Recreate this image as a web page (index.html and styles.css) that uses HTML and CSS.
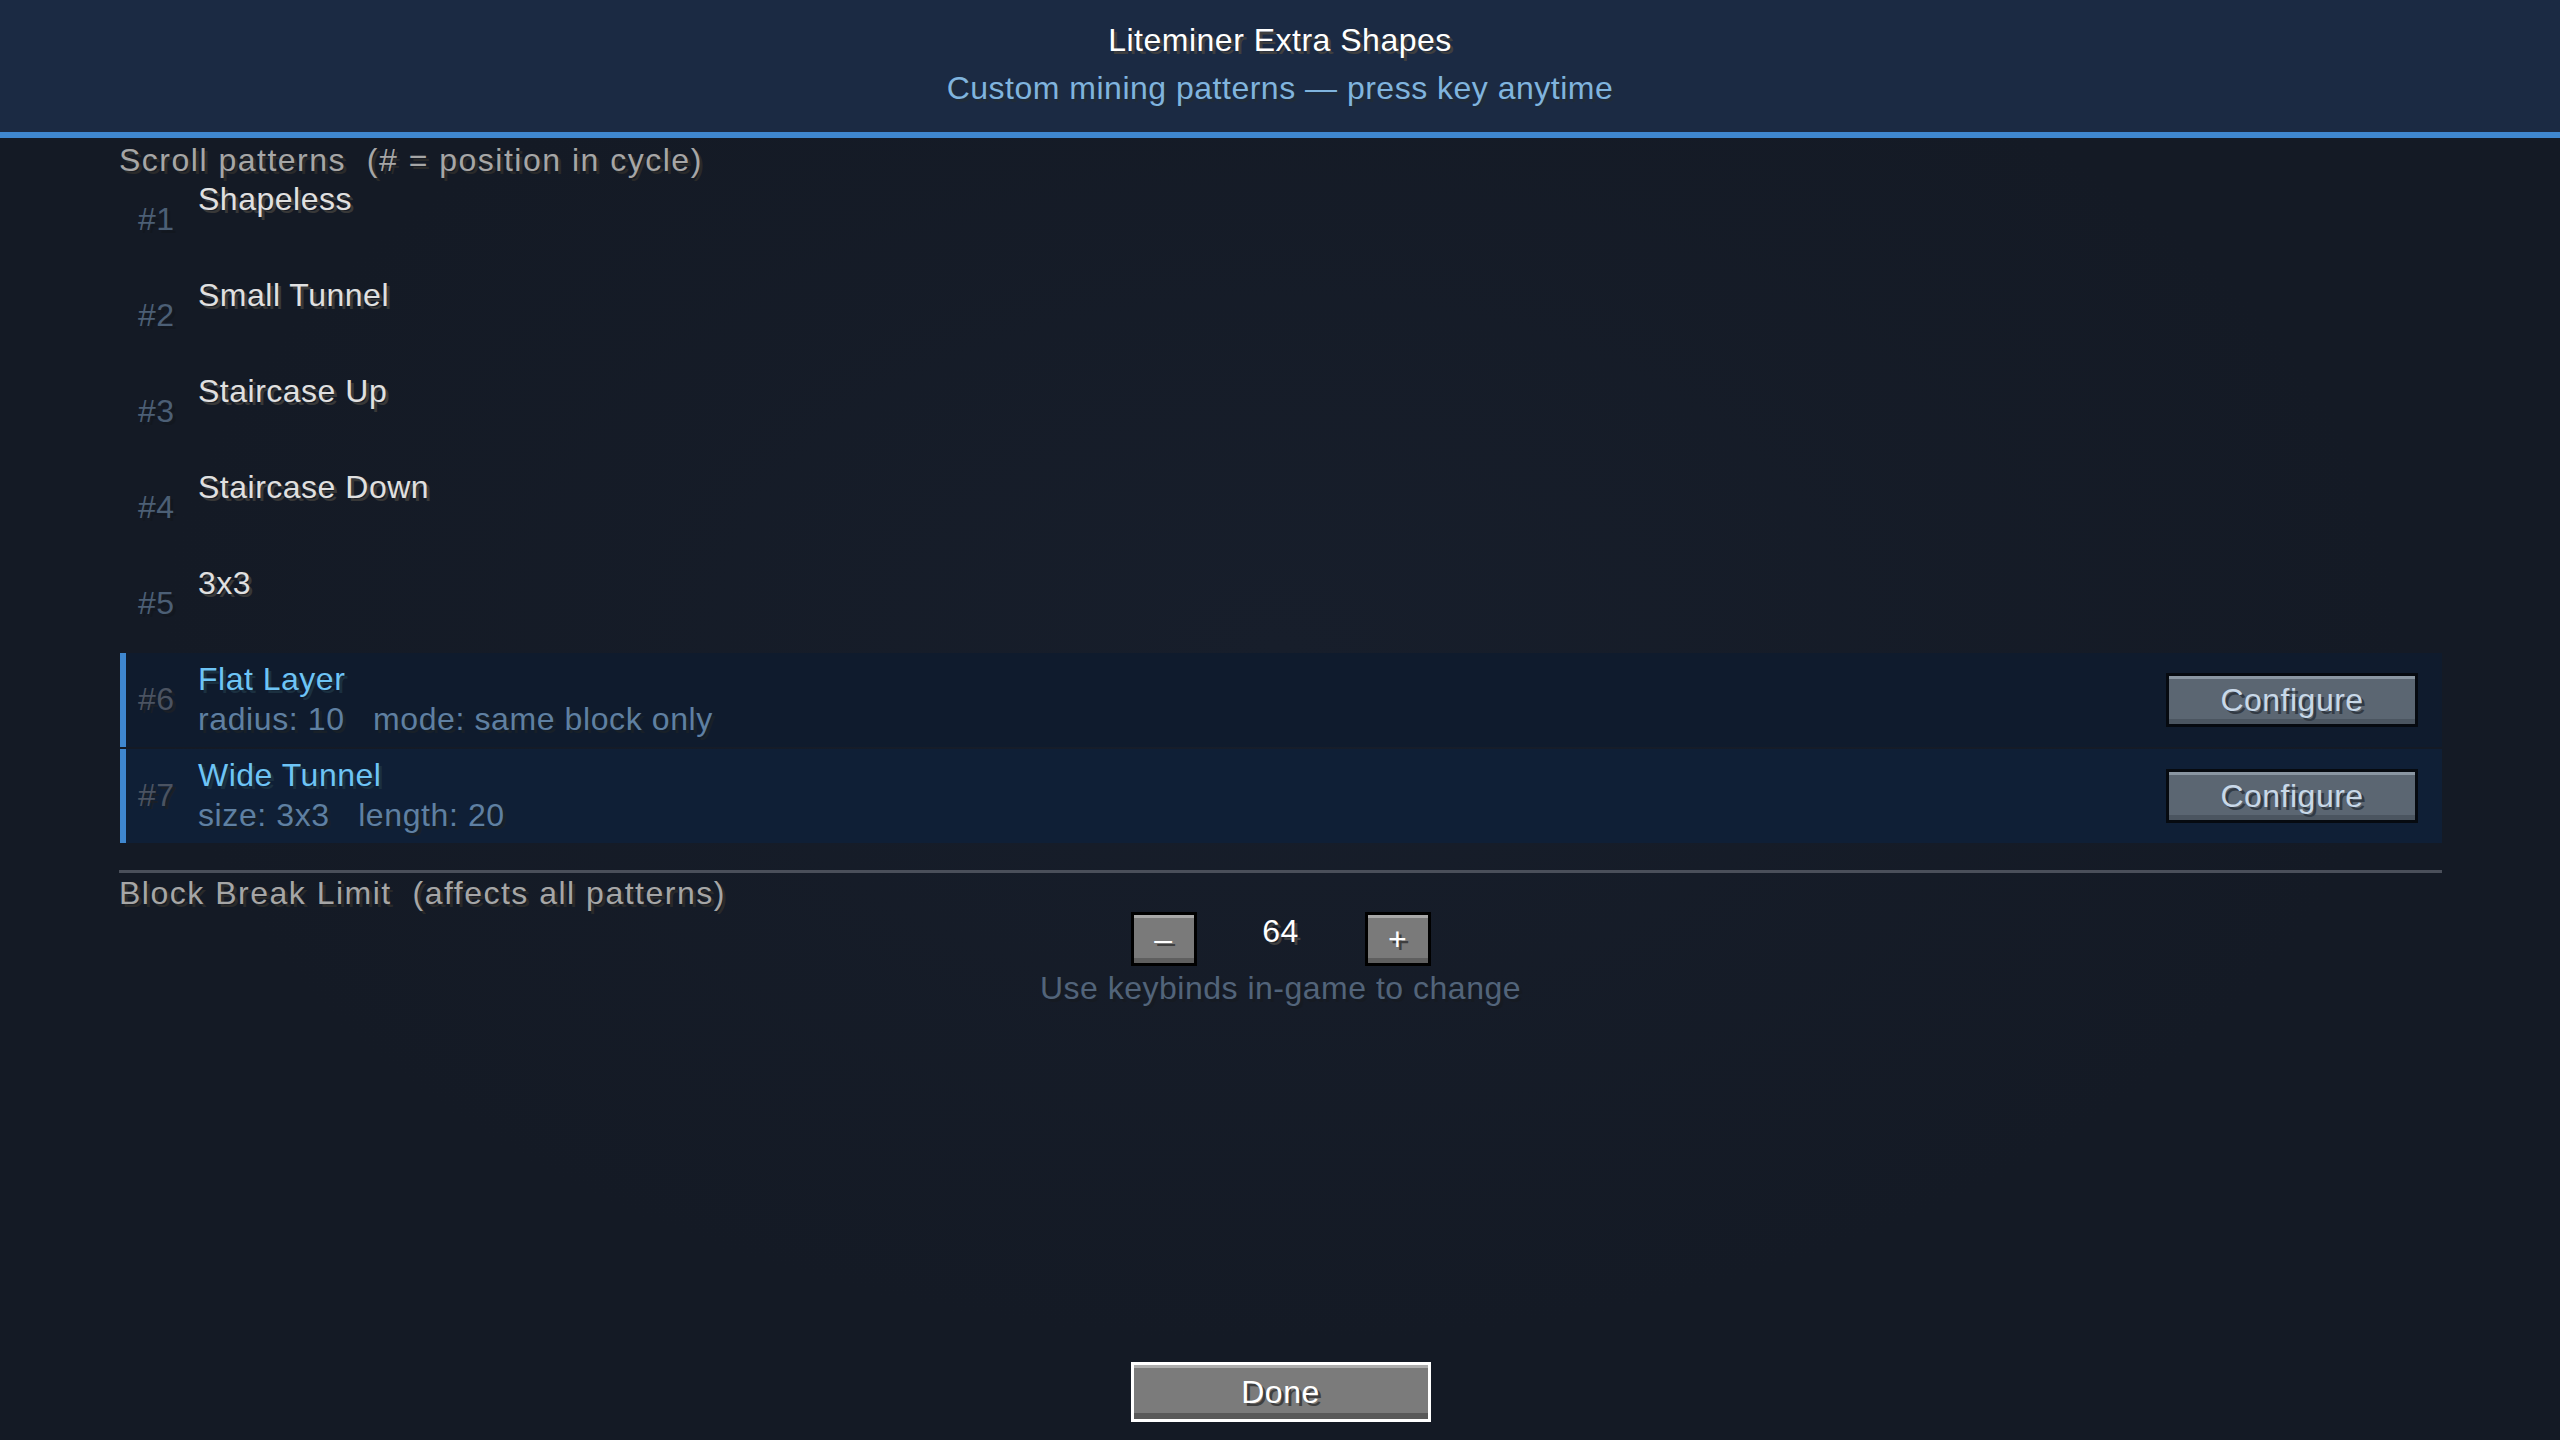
FILE: index.html
```html
<!DOCTYPE HTML>
<html lang="en">
<head>
    <meta charset="utf-8" />
    <meta name="viewport" content="width=device-width, initial-scale=1" />
    <title>Liteminer Extra Shapes</title>
    <link rel="stylesheet" href="styles.css">
</head>
<body>
    <div class="header">
        <div class="title">Liteminer Extra Shapes</div>
        <div class="subtitle">Custom mining patterns — press key anytime</div>
    </div>

    <div class="content">
        <div class="section-label scroll-label">Scroll patterns  (# = position in cycle)</div>

        <div class="pattern-list">
            <div class="pattern">
                <span class="hash">#1</span>
                <div class="info"><div class="name">Shapeless</div></div>
            </div>
            <div class="pattern">
                <span class="hash">#2</span>
                <div class="info"><div class="name">Small Tunnel</div></div>
            </div>
            <div class="pattern">
                <span class="hash">#3</span>
                <div class="info"><div class="name">Staircase Up</div></div>
            </div>
            <div class="pattern">
                <span class="hash">#4</span>
                <div class="info"><div class="name">Staircase Down</div></div>
            </div>
            <div class="pattern">
                <span class="hash">#5</span>
                <div class="info"><div class="name">3x3</div></div>
            </div>
            <div class="pattern custom">
                <span class="hash">#6</span>
                <div class="info">
                    <div class="name">Flat Layer</div>
                    <div class="meta">radius: 10   mode: same block only</div>
                </div>
                <button class="configure-btn">Configure</button>
            </div>
            <div class="pattern custom hovered">
                <span class="hash">#7</span>
                <div class="info">
                    <div class="name">Wide Tunnel</div>
                    <div class="meta">size: 3x3   length: 20</div>
                </div>
                <button class="configure-btn">Configure</button>
            </div>
        </div>

        <div class="divider"></div>
        <div class="section-label limit-label">Block Break Limit  (affects all patterns)</div>

        <div class="stepper">
            <button class="step-btn">–</button>
            <span class="step-value">64</span>
            <button class="step-btn">+</button>
        </div>
        <div class="hint">Use keybinds in-game to change</div>

        <div class="footer">
            <button class="done-btn">Done</button>
        </div>
    </div>
</body>
</html>
```

FILE: styles.css
```css
body {
    margin: 0;
    height: 100vh;
    display: flex;
    flex-direction: column;
    font-family: "Liberation Sans", Arial, sans-serif;
    font-size: 32px;
    line-height: 36px;
    letter-spacing: 0.5px;
    background-color: #141a25;
    background-image: radial-gradient(ellipse at 50% 45%, #171e2b 0%, #141a25 62%);
}

button {
    font-family: inherit;
    font-size: inherit;
    line-height: inherit;
    letter-spacing: inherit;
    padding: 0;
    cursor: pointer;
}

.header {
    height: 110px;
    padding-top: 22px;
    background: #1b2a43;
    border-bottom: 6px solid #3f87cf;
    text-align: center;
}

.title {
    color: #ffffff;
    text-shadow: 3px 3px 0 #3f3f3f;
}

.subtitle {
    margin-top: 12px;
    color: #80b4de;
    text-shadow: 3px 3px 0 #1f2b38;
}

.content {
    flex: 1;
    display: flex;
    flex-direction: column;
    padding: 9px 118px 18px 119px;
}

.section-label {
    color: #a6a6a6;
    text-shadow: 3px 3px 0 #2a2a2a;
    white-space: pre;
    letter-spacing: 1.5px;
}

.scroll-label {
    line-height: 26px;
}

.pattern-list {
    display: flex;
    flex-direction: column;
    gap: 2px;
    margin-left: 1px;
}

.pattern {
    height: 94px;
    box-sizing: border-box;
    display: flex;
    align-items: center;
    padding: 0 24px 0 12px;
    border-left: 6px solid transparent;
}

.pattern.custom {
    background: #0f1b2d;
    border-left-color: #3f87cf;
}

.pattern.hovered {
    background: #0f1f36;
}

.hash {
    width: 60px;
    flex-shrink: 0;
    margin-top: -2px;
    color: #4c5f75;
    text-shadow: 3px 3px 0 #12171f;
}

.pattern.custom .hash {
    color: #4b5361;
    text-shadow: 3px 3px 0 #1a1f27;
}

.info {
    align-self: flex-start;
    padding-top: 8px;
}

.name {
    color: #e0e0e0;
    text-shadow: 3px 3px 0 #383838;
}

.pattern.custom .name {
    color: #6ec4f5;
    text-shadow: 3px 3px 0 #1b3040;
}

.meta {
    margin-top: 4px;
    color: #5f80a2;
    text-shadow: 3px 3px 0 #182028;
    white-space: pre;
    letter-spacing: 0.6px;
}

.configure-btn {
    margin-left: auto;
    width: 252px;
    height: 54px;
    box-sizing: border-box;
    border: 3px solid #060a10;
    background: #5b6672;
    box-shadow: inset 0 3px 0 #8a96a2, inset 0 -5px 0 #4b5560;
    color: #c8d8e8;
    text-shadow: 3px 3px 0 #323a44;
}

.divider {
    margin-top: 27px;
    height: 3px;
    background: #4a4f5a;
}

.limit-label {
    margin-top: 2px;
}

.stepper {
    margin-top: 1px;
    display: flex;
    justify-content: center;
    align-items: flex-start;
}

.step-btn {
    width: 66px;
    height: 54px;
    box-sizing: border-box;
    border: 3px solid #000000;
    background: #7a7a7a;
    box-shadow: inset 0 3px 0 #a8a8a8, inset 0 -5px 0 #5f5f5f;
    color: #ffffff;
    text-shadow: 3px 3px 0 #3f3f3f;
}

.step-value {
    width: 168px;
    padding-top: 1px;
    text-align: center;
    color: #ffffff;
    text-shadow: 3px 3px 0 #3f3f3f;
}

.hint {
    margin-top: 4px;
    text-align: center;
    color: #52647a;
    text-shadow: 3px 3px 0 #151a22;
}

.footer {
    margin-top: auto;
    display: flex;
    justify-content: center;
}

.done-btn {
    width: 300px;
    height: 60px;
    box-sizing: border-box;
    border: 3px solid #ffffff;
    background: #7b7b7b;
    box-shadow: inset 0 3px 0 #acacac, inset 0 -6px 0 #595959;
    color: #ffffff;
    text-shadow: 3px 3px 0 #3f3f3f;
}
```
